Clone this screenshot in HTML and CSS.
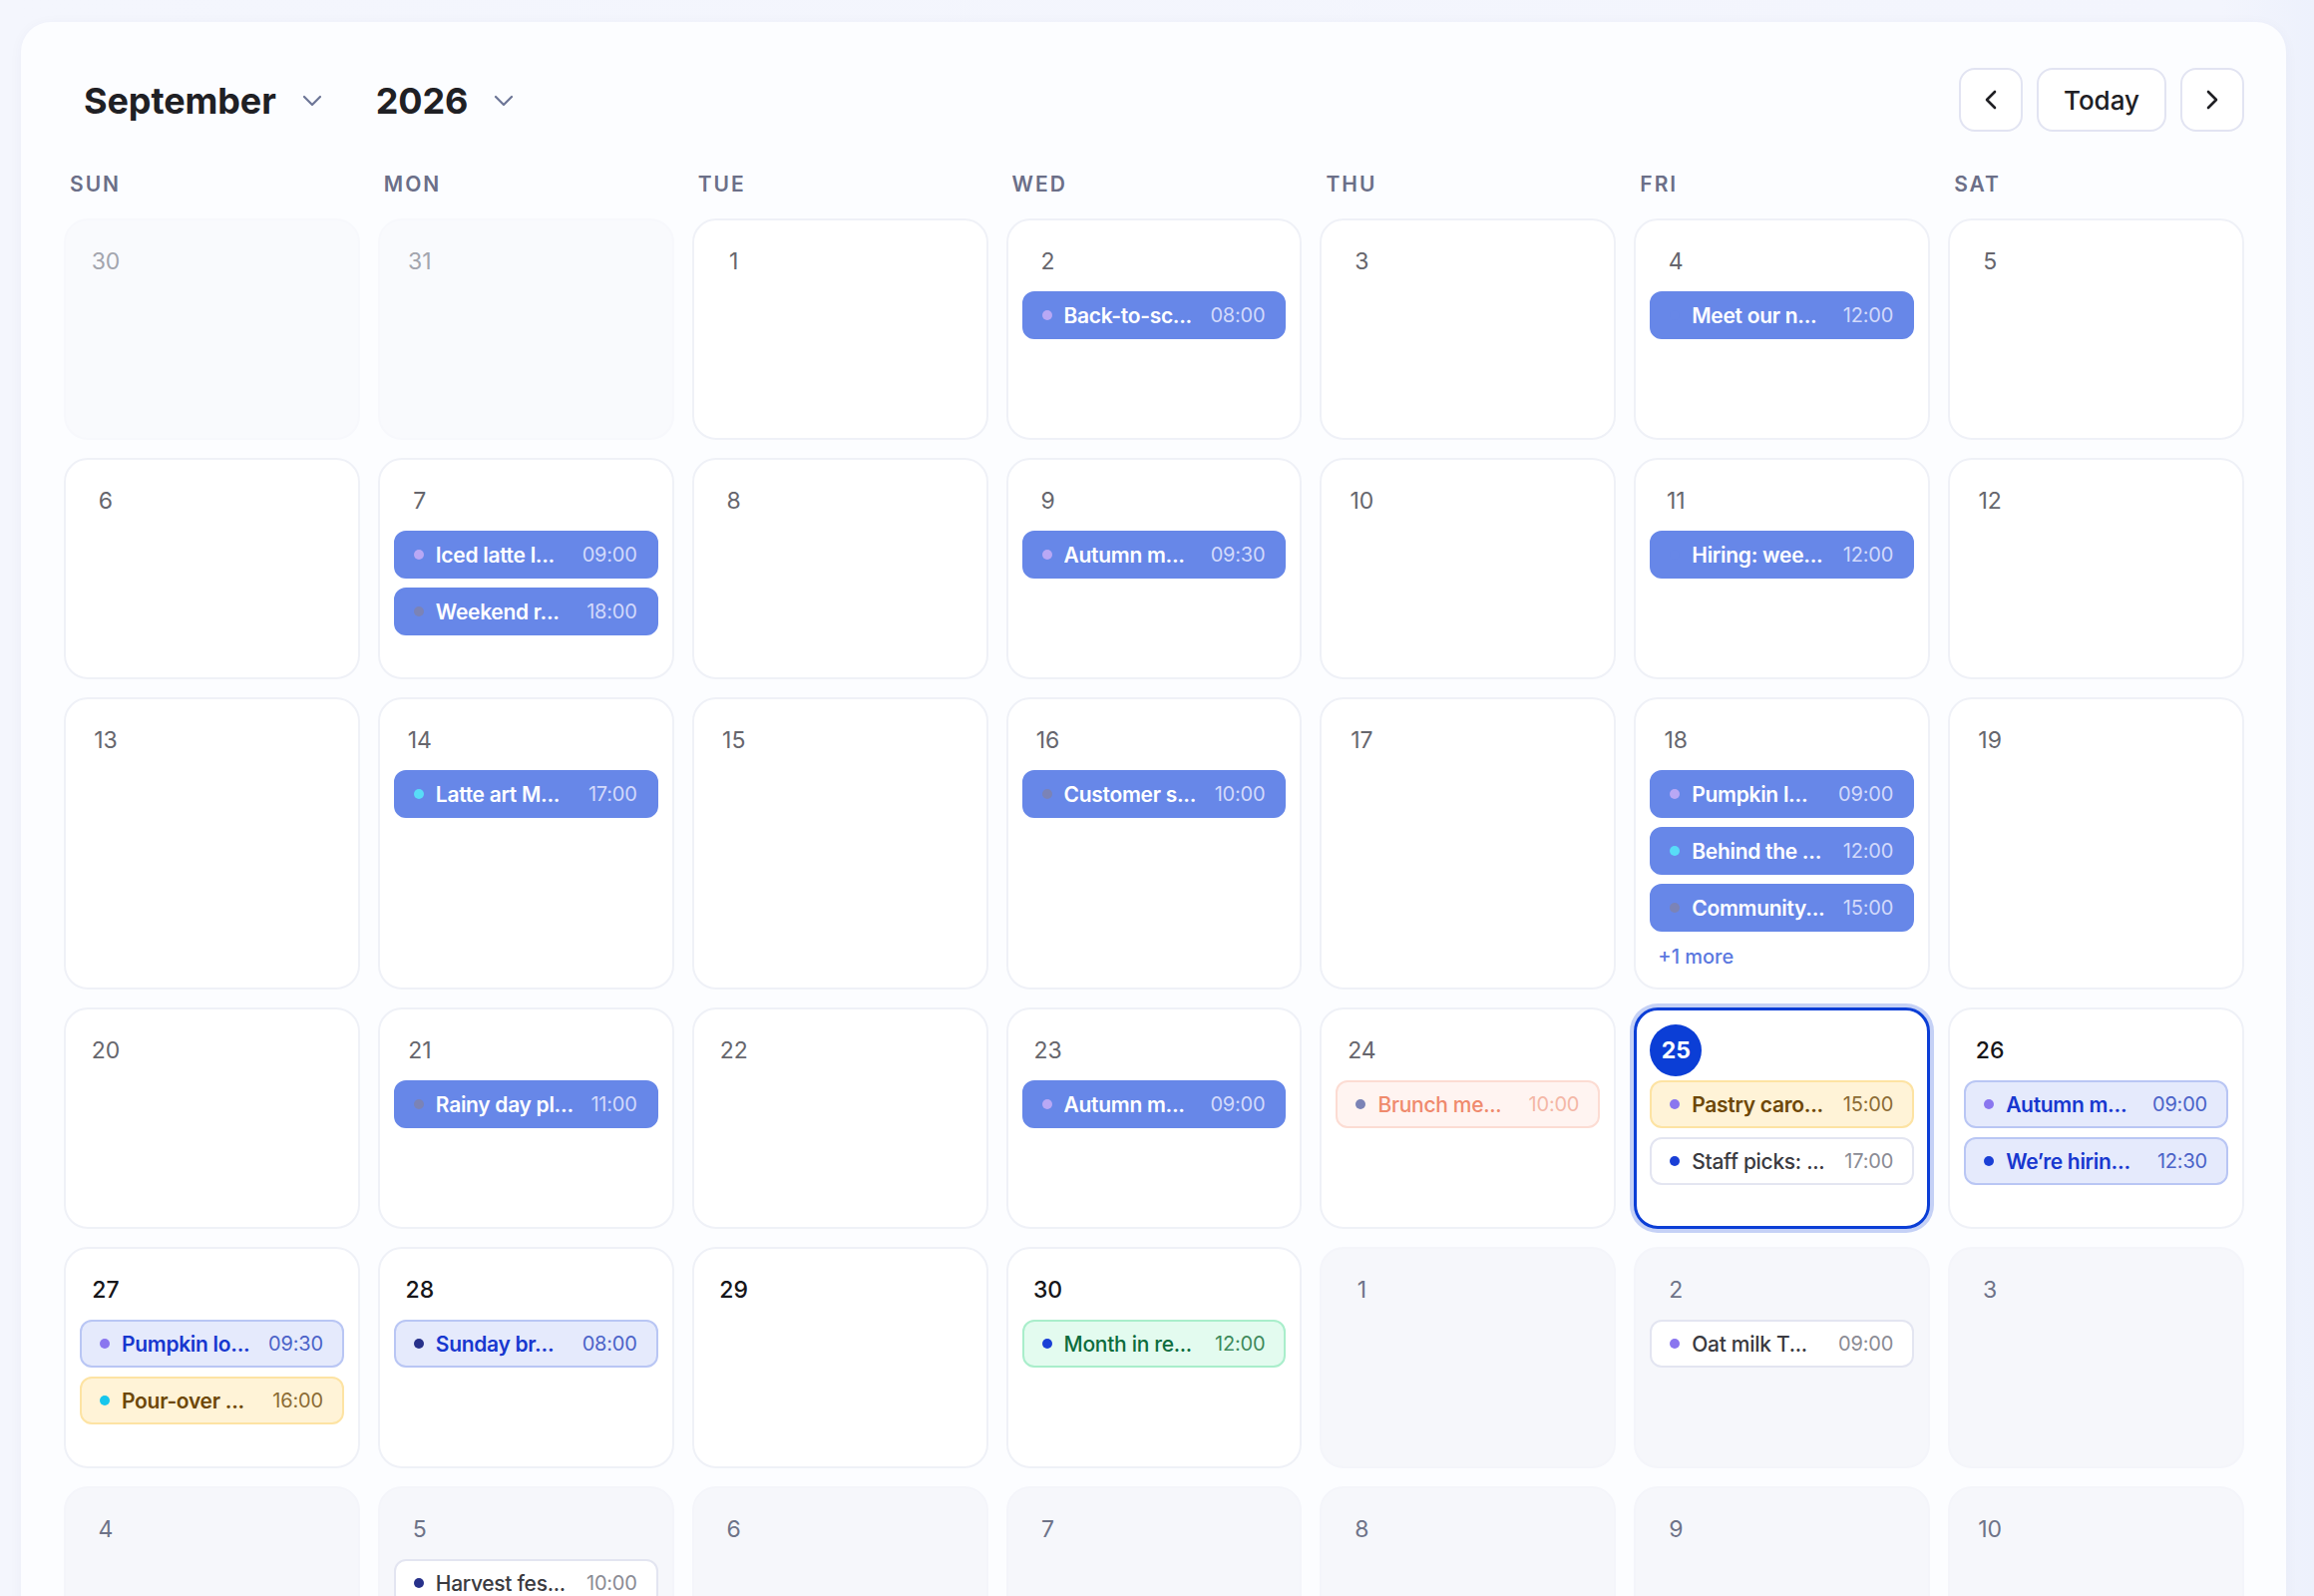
FILE: index.html
```html
<!DOCTYPE html>
<html lang="en">
<head>
    <meta charset="UTF-8">
    <title>Café Calendar</title>
    <link rel="stylesheet" href="styles.css">
</head>
<body>

<div class="page">
<section class="calendar">

    <header class="cal-header">
        <div class="cal-pickers">
            <button class="picker">September
                <svg class="picker-caret" width="20" height="12" viewBox="0 0 20 12"><path d="M2 2l8 8 8-8"/></svg>
            </button>
            <button class="picker">2026
                <svg class="picker-caret" width="20" height="12" viewBox="0 0 20 12"><path d="M2 2l8 8 8-8"/></svg>
            </button>
        </div>
        <div class="cal-nav">
            <button class="nav-btn" aria-label="Previous month">
                <svg width="14" height="22" viewBox="0 0 14 22"><path d="M11 3L3 11l8 8"/></svg>
            </button>
            <button class="nav-btn nav-today">Today</button>
            <button class="nav-btn" aria-label="Next month">
                <svg width="14" height="22" viewBox="0 0 14 22"><path d="M3 3l8 8-8 8"/></svg>
            </button>
        </div>
    </header>

    <div class="weekdays">
        <div class="weekday">SUN</div>
        <div class="weekday">MON</div>
        <div class="weekday">TUE</div>
        <div class="weekday">WED</div>
        <div class="weekday">THU</div>
        <div class="weekday">FRI</div>
        <div class="weekday">SAT</div>
    </div>

    <div class="month">
        <!-- week 1 -->
        <div class="day is-prev"><span class="day-num">30</span></div>
        <div class="day is-prev"><span class="day-num">31</span></div>
        <div class="day is-past"><span class="day-num">1</span></div>
        <div class="day is-past"><span class="day-num">2</span>
            <div class="events">
                <div class="event event--done"><i class="dot dot-lilac"></i><span class="event-title">Back-to-sc...</span><span class="event-time">08:00</span></div>
            </div>
        </div>
        <div class="day is-past"><span class="day-num">3</span></div>
        <div class="day is-past"><span class="day-num">4</span>
            <div class="events">
                <div class="event event--done"><i class="dot dot-blend"></i><span class="event-title">Meet our n...</span><span class="event-time">12:00</span></div>
            </div>
        </div>
        <div class="day is-past"><span class="day-num">5</span></div>

        <!-- week 2 -->
        <div class="day is-past"><span class="day-num">6</span></div>
        <div class="day is-past"><span class="day-num">7</span>
            <div class="events">
                <div class="event event--done"><i class="dot dot-lilac"></i><span class="event-title">Iced latte l...</span><span class="event-time">09:00</span></div>
                <div class="event event--done"><i class="dot dot-slate"></i><span class="event-title">Weekend r...</span><span class="event-time">18:00</span></div>
            </div>
        </div>
        <div class="day is-past"><span class="day-num">8</span></div>
        <div class="day is-past"><span class="day-num">9</span>
            <div class="events">
                <div class="event event--done"><i class="dot dot-lilac"></i><span class="event-title">Autumn m...</span><span class="event-time">09:30</span></div>
            </div>
        </div>
        <div class="day is-past"><span class="day-num">10</span></div>
        <div class="day is-past"><span class="day-num">11</span>
            <div class="events">
                <div class="event event--done"><i class="dot dot-blend"></i><span class="event-title">Hiring: wee...</span><span class="event-time">12:00</span></div>
            </div>
        </div>
        <div class="day is-past"><span class="day-num">12</span></div>

        <!-- week 3 -->
        <div class="day is-past"><span class="day-num">13</span></div>
        <div class="day is-past"><span class="day-num">14</span>
            <div class="events">
                <div class="event event--done"><i class="dot dot-sky"></i><span class="event-title">Latte art M...</span><span class="event-time">17:00</span></div>
            </div>
        </div>
        <div class="day is-past"><span class="day-num">15</span></div>
        <div class="day is-past"><span class="day-num">16</span>
            <div class="events">
                <div class="event event--done"><i class="dot dot-slate"></i><span class="event-title">Customer s...</span><span class="event-time">10:00</span></div>
            </div>
        </div>
        <div class="day is-past"><span class="day-num">17</span></div>
        <div class="day is-past"><span class="day-num">18</span>
            <div class="events">
                <div class="event event--done"><i class="dot dot-lilac"></i><span class="event-title">Pumpkin l...</span><span class="event-time">09:00</span></div>
                <div class="event event--done"><i class="dot dot-sky"></i><span class="event-title">Behind the ...</span><span class="event-time">12:00</span></div>
                <div class="event event--done"><i class="dot dot-slate"></i><span class="event-title">Community...</span><span class="event-time">15:00</span></div>
                <a class="more">+1 more</a>
            </div>
        </div>
        <div class="day is-past"><span class="day-num">19</span></div>

        <!-- week 4 -->
        <div class="day is-past"><span class="day-num">20</span></div>
        <div class="day is-past"><span class="day-num">21</span>
            <div class="events">
                <div class="event event--done"><i class="dot dot-slate"></i><span class="event-title">Rainy day pl...</span><span class="event-time">11:00</span></div>
            </div>
        </div>
        <div class="day is-past"><span class="day-num">22</span></div>
        <div class="day is-past"><span class="day-num">23</span>
            <div class="events">
                <div class="event event--done"><i class="dot dot-lilac"></i><span class="event-title">Autumn m...</span><span class="event-time">09:00</span></div>
            </div>
        </div>
        <div class="day is-past"><span class="day-num">24</span>
            <div class="events">
                <div class="event event--peach"><i class="dot dot-slate"></i><span class="event-title">Brunch me...</span><span class="event-time">10:00</span></div>
            </div>
        </div>
        <div class="day is-today"><span class="day-num">25</span>
            <div class="events">
                <div class="event event--amber"><i class="dot dot-violet"></i><span class="event-title">Pastry caro...</span><span class="event-time">15:00</span></div>
                <div class="event event--plain"><i class="dot dot-royal"></i><span class="event-title">Staff picks: ...</span><span class="event-time">17:00</span></div>
            </div>
        </div>
        <div class="day"><span class="day-num">26</span>
            <div class="events">
                <div class="event event--indigo"><i class="dot dot-violet"></i><span class="event-title">Autumn m...</span><span class="event-time">09:00</span></div>
                <div class="event event--indigo"><i class="dot dot-royal"></i><span class="event-title">We’re hirin...</span><span class="event-time">12:30</span></div>
            </div>
        </div>

        <!-- week 5 -->
        <div class="day"><span class="day-num">27</span>
            <div class="events">
                <div class="event event--indigo"><i class="dot dot-violet"></i><span class="event-title">Pumpkin lo...</span><span class="event-time">09:30</span></div>
                <div class="event event--amber"><i class="dot dot-cyan"></i><span class="event-title">Pour-over ...</span><span class="event-time">16:00</span></div>
            </div>
        </div>
        <div class="day"><span class="day-num">28</span>
            <div class="events">
                <div class="event event--indigo"><i class="dot dot-navy"></i><span class="event-title">Sunday br...</span><span class="event-time">08:00</span></div>
            </div>
        </div>
        <div class="day"><span class="day-num">29</span></div>
        <div class="day"><span class="day-num">30</span>
            <div class="events">
                <div class="event event--mint"><i class="dot dot-royal"></i><span class="event-title">Month in re...</span><span class="event-time">12:00</span></div>
            </div>
        </div>
        <div class="day is-next"><span class="day-num">1</span></div>
        <div class="day is-next"><span class="day-num">2</span>
            <div class="events">
                <div class="event event--plain"><i class="dot dot-violet"></i><span class="event-title">Oat milk T...</span><span class="event-time">09:00</span></div>
            </div>
        </div>
        <div class="day is-next"><span class="day-num">3</span></div>

        <!-- week 6 -->
        <div class="day is-next"><span class="day-num">4</span></div>
        <div class="day is-next"><span class="day-num">5</span>
            <div class="events">
                <div class="event event--plain"><i class="dot dot-navy"></i><span class="event-title">Harvest fes...</span><span class="event-time">10:00</span></div>
            </div>
        </div>
        <div class="day is-next"><span class="day-num">6</span></div>
        <div class="day is-next"><span class="day-num">7</span></div>
        <div class="day is-next"><span class="day-num">8</span></div>
        <div class="day is-next"><span class="day-num">9</span></div>
        <div class="day is-next"><span class="day-num">10</span></div>
    </div>

</section>
</div>

</body>
</html>
```

FILE: styles.css
```css
body {
    margin: 0;
    background: linear-gradient(90deg, #f4f6fd 0%, #f3f5fd 96%, #edf1fc 100%);
    font-family: Inter, "Open Sans", sans-serif;
    color: #1f2024;
}

button {
    font-family: inherit;
    cursor: pointer;
}

.page {
    padding: 22px 28px 0 21px;
}

.calendar {
    background: #fcfdff;
    border-radius: 30px;
    padding: 46px 42px 40px 43px;
    box-shadow: 0 2px 14px rgba(40, 52, 110, 0.04);
}

/* header: month / year pickers and navigation */
.cal-header {
    display: flex;
    align-items: center;
    justify-content: space-between;
    height: 64px;
}

.cal-pickers {
    display: flex;
    align-items: center;
    gap: 54px;
    padding-left: 20px;
}

.picker {
    display: flex;
    align-items: center;
    gap: 26px;
    padding: 2px 0 0;
    border: none;
    background: none;
    font-size: 36px;
    font-weight: 700;
    color: #1f2024;
    letter-spacing: -0.1px;
}

.picker-caret path {
    fill: none;
    stroke: #6c7596;
    stroke-width: 2.2;
    stroke-linecap: round;
    stroke-linejoin: round;
}

.cal-nav {
    display: flex;
    gap: 14px;
}

.nav-btn {
    width: 64px;
    height: 64px;
    display: flex;
    align-items: center;
    justify-content: center;
    background: #fff;
    border: 2px solid #e2e4f2;
    border-radius: 16px;
    padding: 0;
}

.nav-btn path {
    fill: none;
    stroke: #1f1f23;
    stroke-width: 2.6;
    stroke-linecap: round;
    stroke-linejoin: round;
}

.nav-today {
    width: 130px;
    font-size: 26px;
    font-weight: 500;
    color: #202024;
}

/* weekday labels */
.weekdays {
    display: grid;
    grid-template-columns: repeat(7, 1fr);
    column-gap: 18px;
    margin: 39px 0 20px;
}

.weekday {
    padding-left: 6px;
    font-size: 21px;
    font-weight: 600;
    line-height: 28px;
    letter-spacing: 2px;
    color: #6b6f88;
}

/* month grid */
.month {
    display: grid;
    grid-template-columns: repeat(7, 1fr);
    gap: 18px;
}

.day {
    min-height: 222px;
    box-sizing: border-box;
    padding: 15px 14px;
    background: #fff;
    border: 2px solid #eff1f7;
    border-radius: 24px;
    min-width: 0;
}

.day.is-prev {
    background: #f9fafd;
    border-color: #f7f8fc;
}

.day.is-next {
    background: #f6f7fb;
    border-color: #f4f5fa;
}

.day-num {
    width: 52px;
    height: 52px;
    display: flex;
    align-items: center;
    justify-content: center;
    font-size: 23px;
    font-weight: 500;
    color: #16161a;
}

.is-prev .day-num { color: #a3a5ae; font-weight: 400; }
.is-past .day-num { color: #66666d; font-weight: 400; }
.is-next .day-num { color: #6e7388; font-weight: 400; }

.day.is-today {
    border: 3px solid #0b3ed6;
    padding: 14px 13px;
    box-shadow: 0 0 0 4px #c5d1f6;
}

.is-today .day-num {
    border-radius: 50%;
    background: #0b3ed6;
    color: #fff;
    font-weight: 700;
}

/* event pills */
.events {
    display: flex;
    flex-direction: column;
    gap: 9px;
    margin-top: 4px;
}

.event {
    height: 48px;
    box-sizing: border-box;
    display: flex;
    align-items: center;
    gap: 12px;
    padding: 0 19px 0 18px;
    border-radius: 12px;
    border: 2px solid transparent;
    font-size: 21px;
}

.event-title {
    flex: 1;
    min-width: 0;
    overflow: hidden;
    white-space: nowrap;
    text-overflow: ellipsis;
    font-weight: 600;
    letter-spacing: -0.3px;
}

.event-time {
    font-size: 20px;
    font-weight: 400;
    letter-spacing: -0.2px;
}

.dot {
    flex: none;
    width: 10px;
    height: 10px;
    border-radius: 50%;
}

.event--done { background: #6787e8; border-color: #6787e8; }
.event--done .event-title { color: #fff; }
.event--done .event-time { color: #d2d9fb; }

.event--peach { background: #fff4f1; border-color: #fcdcd3; }
.event--peach .event-title { color: #ef8a6d; font-weight: 500; }
.event--peach .event-time { color: #f4b7a6; }

.event--amber { background: #fff3d7; border-color: #fde3a3; }
.event--amber .event-title { color: #6d4706; }
.event--amber .event-time { color: #8c6c35; }

.event--plain { background: #fff; border-color: #e3e5f1; }
.event--plain .event-title { color: #3a3a40; font-weight: 500; }
.event--plain .event-time { color: #8a8b94; }

.event--indigo { background: #e5eafc; border-color: #b9c6f4; }
.event--indigo .event-title { color: #1737cf; }
.event--indigo .event-time { color: #4b63c8; }

.event--mint { background: #e3fbef; border-color: #a9eecb; }
.event--mint .event-title { color: #0c6c3d; font-weight: 500; }
.event--mint .event-time { color: #3f8a5c; }

.dot-lilac  { background: #b9a8f5; }
.dot-sky    { background: #58dcf7; }
.dot-slate  { background: #7b83b6; }
.dot-blend  { background: #6787e8; }
.dot-violet { background: #8a76ef; }
.dot-royal  { background: #1a3fd6; }
.dot-navy   { background: #27318a; }
.dot-cyan   { background: #17c6ec; }

.more {
    padding-left: 8px;
    line-height: 32px;
    font-size: 20px;
    font-weight: 500;
    color: #5b78df;
}
```
